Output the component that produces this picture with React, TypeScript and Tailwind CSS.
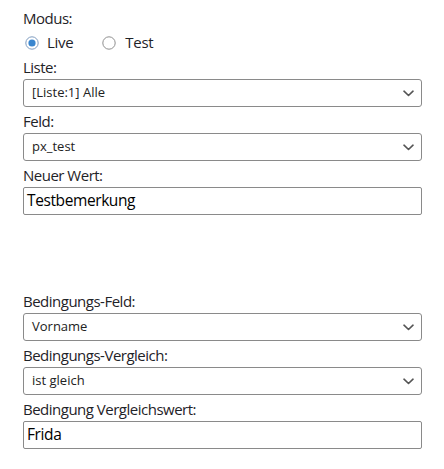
import React from "react";

function Chevron() {
  return (
    <svg width="11" height="7" viewBox="0 0 11 7" fill="none">
      <path d="M1 1.2 L5.5 5.5 L10 1.2" stroke="#555" strokeWidth="1.6" strokeLinecap="round" strokeLinejoin="round" />
    </svg>
  );
}

function Radio({ checked }: { checked: boolean }) {
  return (
    <svg width="14" height="14" viewBox="0 0 14 14">
      <circle cx="7" cy="7" r="6.2" fill="white" stroke={checked ? "#7f9cbf" : "#8f8f8f"} strokeWidth="1" />
      {checked && <circle cx="7" cy="7" r="3.6" fill="#3a86cf" />}
    </svg>
  );
}

function Label({ children }: { children: React.ReactNode }) {
  return <div className="h-6 leading-6 text-[15px] tracking-[-0.5px] text-[#1f2328]">{children}</div>;
}

function Select({ value }: { value: string }) {
  return (
    <div className="h-7 mb-[2px] flex items-center justify-between border border-[#8a8a8a] rounded-[3px] pl-[8px] pr-[7px] bg-white">
      <span className="text-[13px] text-[#222]">{value}</span>
      <Chevron />
    </div>
  );
}

function Input({ value }: { value: string }) {
  return (
    <div className="h-7 mb-[2px] flex items-center border border-[#8a8a8a] rounded-[2px] pl-[3px] bg-white">
      <span className="text-[15.5px] tracking-[-0.4px] text-black">{value}</span>
    </div>
  );
}

export default function App() {
  return (
    <div className="w-[444px] h-[469px] bg-white pl-[23px] pr-[22px] pt-[6px] font-['Open_Sans',sans-serif]">
      <Label>Modus:</Label>
      <div className="h-[25px] flex items-center text-[15px] tracking-[-0.3px] text-[#1f2328]">
        <span className="ml-[2px]"><Radio checked /></span>
        <span className="ml-[8px]">Live</span>
        <span className="ml-[29px]"><Radio checked={false} /></span>
        <span className="ml-[9px]">Test</span>
      </div>
      <Label>Liste:</Label>
      <Select value="[Liste:1] Alle" />
      <Label>Feld:</Label>
      <Select value="px_test" />
      <Label>Neuer Wert:</Label>
      <Input value="Testbemerkung" />
      <div className="h-[72px]" />
      <Label>Bedingungs-Feld:</Label>
      <Select value="Vorname" />
      <Label>Bedingungs-Vergleich:</Label>
      <Select value="ist gleich" />
      <Label>Bedingung Vergleichswert:</Label>
      <Input value="Frida" />
    </div>
  );
}
